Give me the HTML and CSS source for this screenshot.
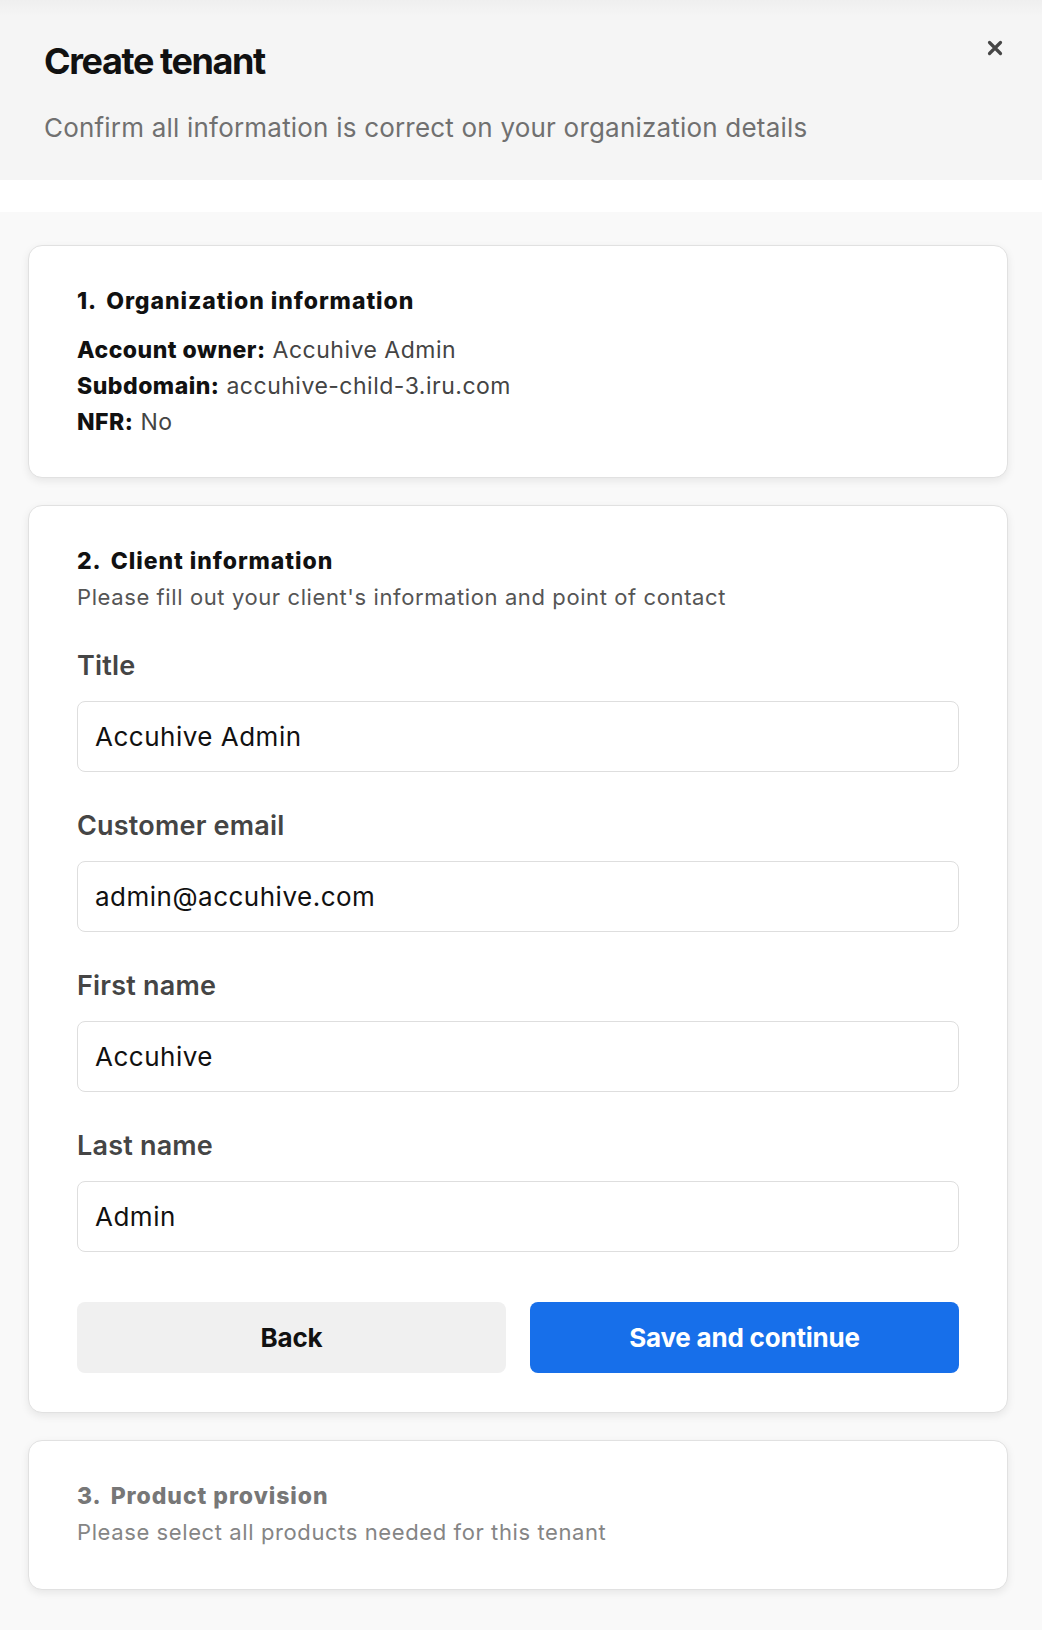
FILE: index.html
```html
<!DOCTYPE html>
<html lang="en">
<head>
<meta charset="utf-8">
<title>Create tenant</title>
<link rel="stylesheet" href="styles.css">
</head>
<body>
<div class="modal">
  <header class="modal-header">
    <div class="header-row">
      <h1 class="modal-title">Create tenant</h1>
      <button class="close-btn" aria-label="Close">
        <svg width="16" height="16" viewBox="0 0 16 16"><path d="M2.5 2.5 L13.5 13.5 M13.5 2.5 L2.5 13.5" stroke="#464646" stroke-width="3.2" stroke-linecap="round"/></svg>
      </button>
    </div>
    <p class="modal-subtitle">Confirm all information is correct on your organization details</p>
  </header>
  <div class="spacer"></div>
  <main class="modal-body">
    <section class="card">
      <h2 class="card-title"><span class="num">1.</span>Organization information</h2>
      <div class="info">
        <div class="info-line"><b>Account owner:</b> Accuhive Admin</div>
        <div class="info-line"><b>Subdomain:</b> accuhive-child-3.iru.com</div>
        <div class="info-line"><b>NFR:</b> No</div>
      </div>
    </section>

    <section class="card card-form">
      <h2 class="card-title"><span class="num">2.</span>Client information</h2>
      <p class="card-sub">Please fill out your client's information and point of contact</p>
      <div class="fields">
        <div class="field">
          <label class="field-label">Title</label>
          <div class="input">Accuhive Admin</div>
        </div>
        <div class="field">
          <label class="field-label">Customer email</label>
          <div class="input">admin@accuhive.com</div>
        </div>
        <div class="field">
          <label class="field-label">First name</label>
          <div class="input">Accuhive</div>
        </div>
        <div class="field">
          <label class="field-label">Last name</label>
          <div class="input">Admin</div>
        </div>
      </div>
      <div class="actions">
        <button class="btn btn-back">Back</button>
        <button class="btn btn-primary">Save and continue</button>
      </div>
    </section>

    <section class="card card-disabled">
      <h2 class="card-title"><span class="num">3.</span>Product provision</h2>
      <p class="card-sub">Please select all products needed for this tenant</p>
    </section>
  </main>
</div>
</body>
</html>
```

FILE: styles.css
```css
* { box-sizing: border-box; }

html, body {
  margin: 0;
  padding: 0;
}

body {
  font-family: Inter, "Noto Sans", "Liberation Sans", sans-serif;
  background: #f9f9f9;
  color: #111;
  min-height: 1630px;
}

.modal {
  display: flex;
  flex-direction: column;
}

.modal-header {
  background: linear-gradient(#efefef 0px, #f5f5f5 16px, #f5f5f5 100%);
  padding: 39px 39px 34px 44px;
}

.header-row {
  display: flex;
  justify-content: space-between;
  align-items: flex-start;
}

.modal-title {
  margin: 0;
  font-size: 36px;
  line-height: 44px;
  font-weight: 700;
  letter-spacing: -1.4px;
  color: #111;
}

.close-btn {
  margin-top: 1px;
  width: 16px;
  height: 16px;
  padding: 0;
  border: 0;
  background: none;
  display: flex;
}

.modal-subtitle {
  margin: 27px 0 0;
  font-size: 26px;
  line-height: 36px;
  font-weight: 400;
  letter-spacing: 0.2px;
  color: #707070;
}

.spacer {
  height: 32px;
  background: #fff;
}

.modal-body {
  background: #f9f9f9;
  padding: 33px 34px 40px 28px;
  display: flex;
  flex-direction: column;
  gap: 27px;
}

.card {
  background: #fff;
  border: 1px solid #e1e1e1;
  border-radius: 14px;
  box-shadow: 0 3px 8px rgba(0, 0, 0, 0.08);
  padding: 40px 48px 37px 48px;
}

.card-title {
  margin: 0;
  font-size: 23px;
  line-height: 30px;
  font-weight: 800;
  color: #111;
  letter-spacing: 0.95px;
}

.num {
  margin-right: 9px;
}

.info {
  margin-top: 16px;
}

.info-line {
  font-size: 23px;
  line-height: 36px;
  color: #444;
  letter-spacing: 0.5px;
}

.info-line b {
  color: #111;
  font-weight: 800;
}

.card-sub {
  margin: 4px 0 0;
  font-size: 22px;
  line-height: 34px;
  color: #555;
  letter-spacing: 0.6px;
}

.card-form {
  padding-bottom: 39px;
}

.fields {
  margin-top: 35px;
  display: flex;
  flex-direction: column;
  gap: 37px;
}

.field {
  display: flex;
  flex-direction: column;
  gap: 18px;
}

.field-label {
  font-size: 27px;
  line-height: 34px;
  font-weight: 600;
  color: #454545;
  letter-spacing: 0.2px;
}

.input {
  height: 71px;
  border: 1.5px solid #dedede;
  border-radius: 8px;
  padding: 0 17px;
  display: flex;
  align-items: center;
  font-size: 26px;
  color: #111;
  letter-spacing: 0.5px;
}

.actions {
  margin-top: 50px;
  display: flex;
  gap: 24px;
}

.btn {
  flex: 1;
  height: 71px;
  border: 0;
  border-radius: 8px;
  font-family: inherit;
  font-size: 26px;
  font-weight: 700;
  letter-spacing: -0.2px;
}

.btn-back {
  background: #f0f0f0;
  color: #111;
}

.btn-primary {
  background: #176fea;
  color: #fff;
}

.card-disabled {
  padding-bottom: 40px;
}

.card-disabled .card-title {
  color: #777;
}

.card-disabled .card-sub {
  color: #858585;
}
```
